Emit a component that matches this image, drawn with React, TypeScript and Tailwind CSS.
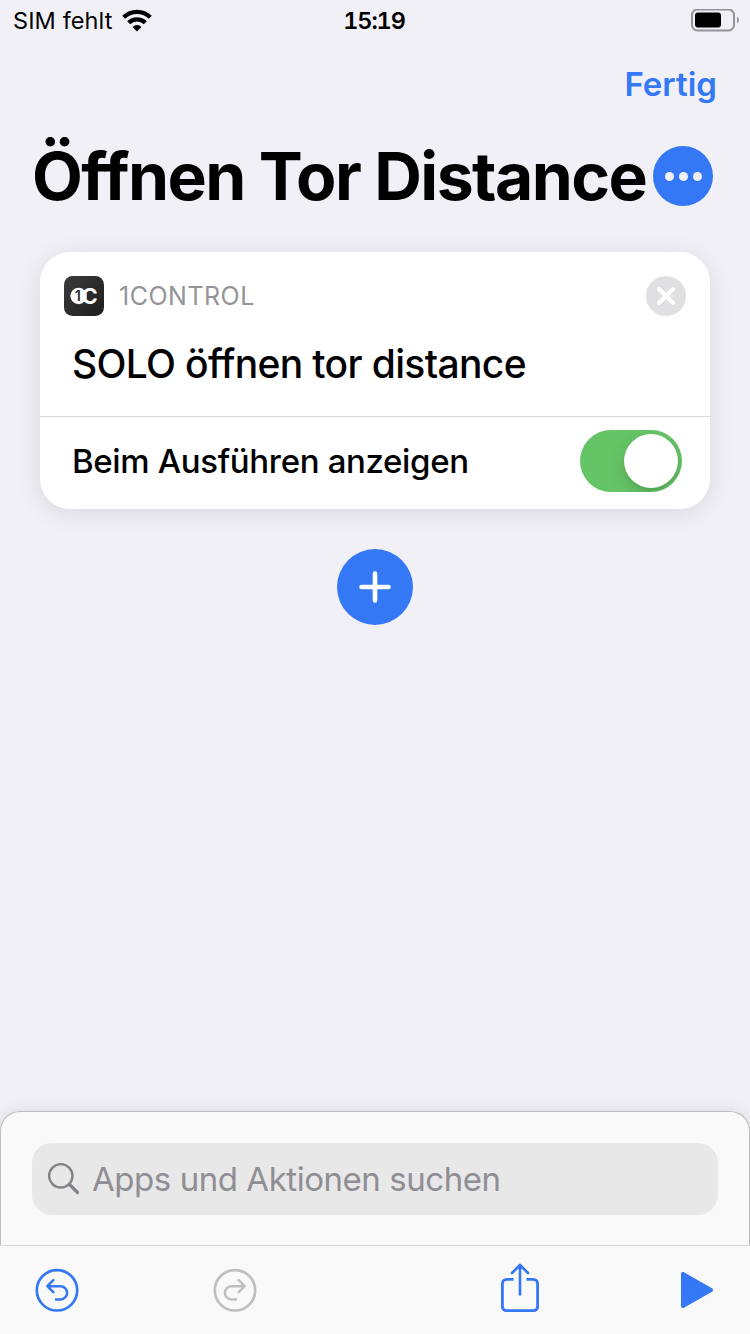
import { useState } from "react"

function WifiIcon() {
    return (
        <svg className="h-[23px] w-[30px]" viewBox="0 0 30 23" fill="none" stroke="black" strokeWidth={4.2}>
            <path d="M1.7 8.3 A18.8 18.8 0 0 1 28.3 8.3" />
            <path d="M6.7 13.8 A11.6 11.6 0 0 1 23.3 13.8" />
            <path d="M15 22.4 L10.6 18 A6.1 6.1 0 0 1 19.4 18 Z" fill="black" stroke="none" />
        </svg>
    )
}

function BatteryIcon() {
    return (
        <svg className="h-6 w-12" viewBox="0 0 48 24" fill="none">
            <rect x="1" y="0.5" width="42" height="21" rx="5.5" stroke="#939297" strokeWidth={2} />
            <rect x="4" y="3.5" width="26" height="15" rx="3" fill="black" />
            <path d="M46 7.5 Q48 8.5 48 11 T46 14.5 Z" fill="#939297" />
        </svg>
    )
}

function StatusBar() {
    return (
        <div className="grid h-[41px] grid-cols-3 items-center pr-[11px] pl-[13px] text-black">
            <div className="flex items-center gap-[10px]">
                <span className="text-[23.5px] tracking-[0.1px] whitespace-nowrap">SIM fehlt</span>
                <WifiIcon />
            </div>
            <span className="pr-1 text-center text-[23.5px] font-semibold tracking-[-1.1px] tabular-nums">15:19</span>
            <div className="flex justify-end">
                <BatteryIcon />
            </div>
        </div>
    )
}

function AppLogo() {
    return (
        <svg className="h-10 w-10" viewBox="0 0 40 40">
            <defs>
                <linearGradient id="logo-bg" x1="0" y1="0" x2="1" y2="1">
                    <stop offset="0" stopColor="#3b3b3b" />
                    <stop offset="1" stopColor="#1e1e1e" />
                </linearGradient>
            </defs>
            <rect width="40" height="40" rx="8.5" fill="url(#logo-bg)" />
            <circle cx="14.6" cy="20" r="8.2" fill="white" />
            <text x="17.7" y="27.7" fontSize="21.5" fontWeight="700" fill="white">C</text>
            <text x="10.8" y="25.2" fontSize="14.5" fontWeight="600" fill="#2c2c2c">1</text>
        </svg>
    )
}

function Toggle({ on, onChange }: { on: boolean; onChange: () => void }) {
    return (
        <button
            role="switch"
            aria-checked={on}
            onClick={onChange}
            className={`flex h-[62px] w-[102px] items-center overflow-hidden rounded-full px-1 ${on ? "justify-end bg-[#65c466]" : "justify-start bg-[#e9e9ea]"}`}
        >
            <span className="h-[54px] w-[54px] rounded-full bg-white shadow-[0_6px_16px_rgba(0,0,0,0.15),0_2px_2px_rgba(0,0,0,0.06)]" />
        </button>
    )
}

function ActionCard() {
    const [show, setShow] = useState(true)

    return (
        <section className="mx-10 mt-[27px] h-[257px] rounded-[30px] bg-white shadow-[0_4px_24px_rgba(0,0,0,0.1)]">
            <div className="flex items-center px-6 pt-6">
                <AppLogo />
                <span className="ml-[15px] pt-0.5 text-[25px] tracking-[0.5px] text-[#949498]">1CONTROL</span>
                <button className="ml-auto flex h-10 w-10 items-center justify-center rounded-full bg-[#e0e0e2]" aria-label="Entfernen">
                    <svg className="h-5 w-5" viewBox="0 0 20 20" stroke="white" strokeWidth={4} strokeLinecap="round">
                        <path d="M3 3 L17 17 M17 3 L3 17" />
                    </svg>
                </button>
            </div>
            <div className="flex h-[101px] items-center border-b border-[#d9d9dc] px-8 pb-1">
                <p className="text-[39px] font-medium tracking-[-0.65px] whitespace-nowrap">SOLO öffnen tor distance</p>
            </div>
            <div className="flex h-[88px] items-center justify-between pr-7 pl-8">
                <span className="pt-0.5 text-[33px] font-[450] tracking-[-0.35px] whitespace-nowrap">Beim Ausführen anzeigen</span>
                <Toggle on={show} onChange={() => setShow(!show)} />
            </div>
        </section>
    )
}

function SearchSheet() {
    return (
        <div className="h-[134px] rounded-t-[20px] border border-b-0 border-[#bdbdc0] bg-[#f9f9f9] px-[31px] pt-[31px] shadow-[0_0_16px_rgba(0,0,0,0.1)]">
            <div className="flex h-[72px] items-center rounded-[20px] bg-[#e8e8e8] pl-4">
                <svg className="h-8 w-8" viewBox="0 0 32 32" fill="none" stroke="#838387" strokeLinecap="round">
                    <circle cx="12.8" cy="12.8" r="11.7" strokeWidth={2.4} />
                    <path d="M21.5 21.5 L29.5 29.5" strokeWidth={3.2} />
                </svg>
                <span className="ml-3 pt-0.5 text-[33px] tracking-[-0.45px] whitespace-nowrap text-[#8e8e93]">Apps und Aktionen suchen</span>
            </div>
        </div>
    )
}

function UndoIcon() {
    return (
        <svg className="h-11 w-11" viewBox="0 0 44 44" fill="none" stroke="currentColor" strokeLinecap="round" strokeLinejoin="round">
            <circle cx="22" cy="22.3" r="20.2" strokeWidth={2.7} />
            <path d="M18.3 12.2 L12.3 18.2 L18.3 24.2 M12.5 18.2 H25.5 A6.6 6.6 0 0 1 25.5 31.4 H21" strokeWidth={2.5} />
        </svg>
    )
}

function Toolbar() {
    return (
        <nav className="flex h-[89px] items-center border-t border-[#d9d9db] bg-[#f9f9f9] pr-[34px] pl-[34.5px] text-[#3478f6]">
            <button aria-label="Widerrufen">
                <UndoIcon />
            </button>
            <button className="ml-[134px] -scale-x-100 text-[#bfbfbf]" aria-label="Wiederholen">
                <UndoIcon />
            </button>
            <button className="ml-[244px]" aria-label="Teilen">
                <svg className="mb-1 h-[50px] w-[38px]" viewBox="0 0 38 50" fill="none" stroke="currentColor" strokeWidth={2.8} strokeLinecap="round" strokeLinejoin="round">
                    <path d="M12.5 16.4 H6 Q1.4 16.4 1.4 21 V43 Q1.4 47.6 6 47.6 H32 Q36.6 47.6 36.6 43 V21 Q36.6 16.4 32 16.4 H25.5" strokeLinecap="butt" />
                    <path d="M19 31.5 V2.6 M11 10 L19 2 L27 10" strokeWidth={2.6} />
                </svg>
            </button>
            <button className="ml-auto" aria-label="Abspielen">
                <svg className="h-9 w-9" viewBox="0 0 36 36" fill="currentColor" stroke="currentColor" strokeWidth={4} strokeLinejoin="round">
                    <path d="M3 2 V34 L31 18 Z" />
                </svg>
            </button>
        </nav>
    )
}

export default function App() {
    return (
        <div className="flex h-[1334px] w-[750px] flex-col overflow-hidden bg-[#f1f0f6] font-['Inter','Liberation_Sans',sans-serif] text-black">
            <StatusBar />
            <header>
                <div className="flex h-[86px] items-center justify-end pt-0.5 pr-[33px]">
                    <button className="text-[33px] font-semibold text-[#3478f6]">Fertig</button>
                </div>
                <div className="flex h-[98px] items-center justify-between pr-[37px] pl-8">
                    <h1 className="w-[621px] text-[66px] font-bold tracking-[-1.58px] whitespace-nowrap">Öffnen Tor Distance</h1>
                    <button className="flex h-[60px] w-[60px] shrink-0 items-center justify-center gap-[5px] rounded-full bg-[#3478f6]" aria-label="Mehr">
                        <span className="h-[9px] w-[9px] rounded-full bg-[#f1f0f6]" />
                        <span className="h-[9px] w-[9px] rounded-full bg-[#f1f0f6]" />
                        <span className="h-[9px] w-[9px] rounded-full bg-[#f1f0f6]" />
                    </button>
                </div>
            </header>
            <ActionCard />
            <button className="mx-auto mt-10 flex h-[76px] w-[76px] items-center justify-center rounded-full bg-[#3478f6]" aria-label="Aktion hinzufügen">
                <svg className="h-8 w-8" viewBox="0 0 32 32" stroke="white" strokeWidth={4.6} strokeLinecap="round">
                    <path d="M16 2.5 V29.5 M2.5 16 H29.5" />
                </svg>
            </button>
            <div className="mt-auto">
                <SearchSheet />
                <Toolbar />
            </div>
        </div>
    )
}
